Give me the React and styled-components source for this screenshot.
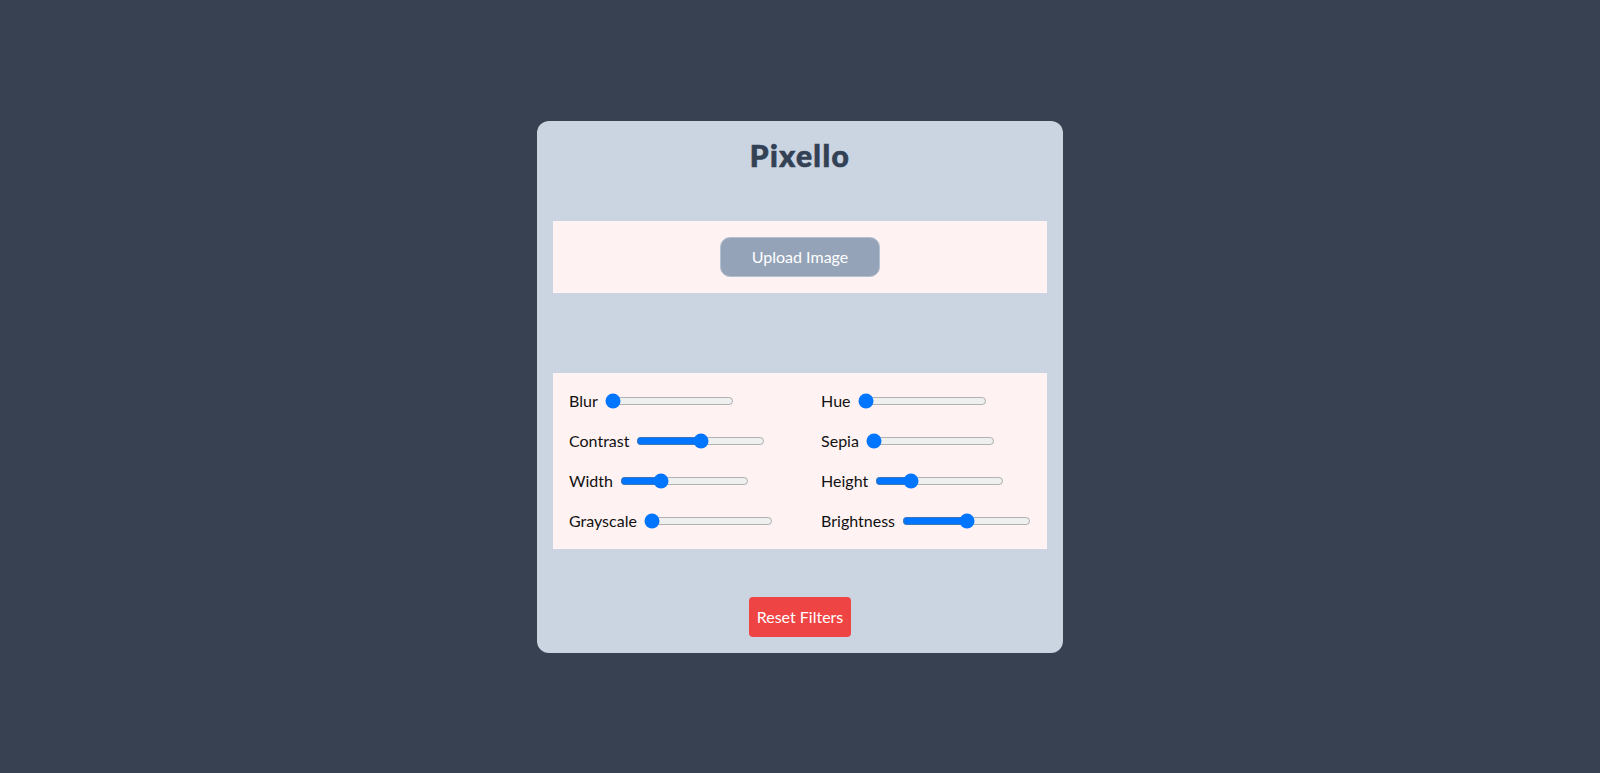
import { useState } from "react";
import styled, { createGlobalStyle } from "styled-components";

const GlobalStyle = createGlobalStyle`
  body {
    margin: 0;
    background-color: #374151;
    font-family: Lato, "Noto Sans", sans-serif;
  }
`;

const Page = styled.div`
  min-height: 100vh;
  display: flex;
  align-items: center;
  justify-content: center;
`;

const Card = styled.div`
  width: 526px;
  box-sizing: border-box;
  padding: 16px;
  background-color: #cbd5e1;
  border-radius: 12px;
  display: flex;
  flex-direction: column;
`;

const Title = styled.h1`
  margin: 0 0 48px;
  text-align: center;
  font-size: 30px;
  line-height: 36px;
  font-weight: 900;
  letter-spacing: 1.4px;
  -webkit-text-stroke: 0.7px #334155;
  color: #334155;
`;

const Panel = styled.div`
  background-color: #fef2f2;
  padding: 16px;
`;

const UploadPanel = styled(Panel)`
  display: flex;
  justify-content: center;
  margin-bottom: 80px;
`;

const UploadButton = styled.label`
  box-sizing: border-box;
  width: 160px;
  height: 40px;
  display: flex;
  align-items: center;
  justify-content: center;
  background-color: #94a3b8;
  border: 1px solid #b4c0cf;
  border-radius: 10px;
  color: #fff;
  font-size: 16px;
  cursor: pointer;

  & input {
    display: none;
  }
`;

const FilterPanel = styled(Panel)`
  display: flex;
  justify-content: space-between;
  margin-bottom: 48px;
`;

const Column = styled.div`
  display: flex;
  flex-direction: column;
  gap: 16px;
`;

const Row = styled.div`
  height: 24px;
  display: flex;
  align-items: center;
  gap: 7px;
  font-size: 16px;
  color: #111;
`;

const Slider = styled.input`
  margin: 0;
`;

const ResetButton = styled.button`
  align-self: center;
  height: 40px;
  padding: 0 8px;
  border: none;
  border-radius: 4px;
  background-color: #ef4444;
  color: #fff;
  font-family: inherit;
  font-size: 16px;
  cursor: pointer;
`;

const initial = {
  blur: 0,
  contrast: 100,
  width: 29,
  grayscale: 0,
  hue: 0,
  sepia: 0,
  height: 25,
  brightness: 100,
};

const left = [
  { key: "blur", label: "Blur", max: 20 },
  { key: "contrast", label: "Contrast", max: 200 },
  { key: "width", label: "Width", max: 100 },
  { key: "grayscale", label: "Grayscale", max: 100 },
];

const right = [
  { key: "hue", label: "Hue", max: 360 },
  { key: "sepia", label: "Sepia", max: 100 },
  { key: "height", label: "Height", max: 100 },
  { key: "brightness", label: "Brightness", max: 200 },
];

function App() {
  const [filters, setFilters] = useState(initial);

  const change = (key) => (e) =>
    setFilters({ ...filters, [key]: Number(e.target.value) });

  const renderColumn = (items) => (
    <Column>
      {items.map((f) => (
        <Row key={f.key}>
          {f.label}
          <Slider
            type="range"
            min={0}
            max={f.max}
            value={filters[f.key]}
            onChange={change(f.key)}
          />
        </Row>
      ))}
    </Column>
  );

  return (
    <Page>
      <GlobalStyle />
      <Card>
        <Title>Pixello</Title>
        <UploadPanel>
          <UploadButton>
            Upload Image
            <input type="file" accept="image/*" />
          </UploadButton>
        </UploadPanel>
        <FilterPanel>
          {renderColumn(left)}
          {renderColumn(right)}
        </FilterPanel>
        <ResetButton onClick={() => setFilters(initial)}>Reset Filters</ResetButton>
      </Card>
    </Page>
  );
}

export default App;
